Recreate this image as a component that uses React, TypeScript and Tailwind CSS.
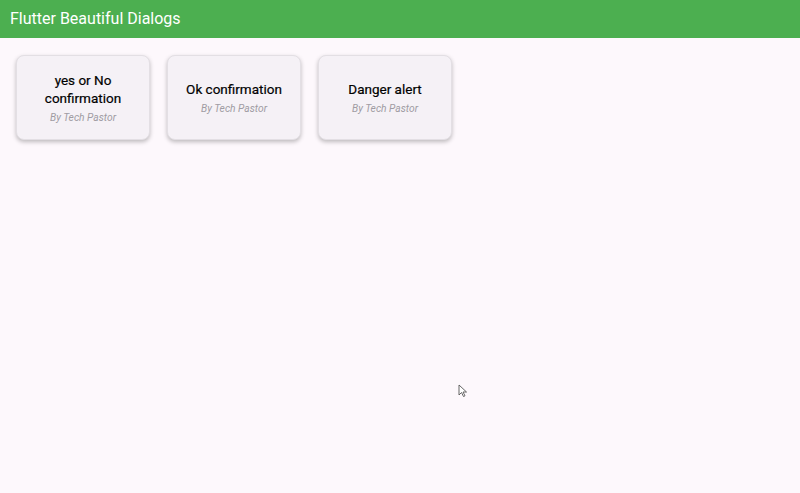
import React from "react"

const cards = ["yes or No confirmation", "Ok confirmation", "Danger alert"]

const Card = ({ title }: { title: string }) => {
    return (
        <div className="w-[134px] h-[85px] rounded-[8px] bg-[#f5f1f6] border border-[#e3dfe4] shadow-[0_2px_4px_rgba(0,0,0,0.25)] flex flex-col items-center justify-center px-3 text-center">
            <p className="text-[13.5px] leading-[18px] font-normal text-black [-webkit-text-stroke:0.2px_black]">{title}</p>
            <p className="text-[10.25px] leading-[15px] italic text-[#a09ca3] mt-[3px]">By Tech Pastor</p>
        </div>
    )
}

export default function App() {
    return (
        <div className="relative w-[800px] h-[493px] bg-[#fdf8fc] overflow-hidden" style={{ fontFamily: "Roboto, 'Liberation Sans', sans-serif" }}>
            {/* app bar */}
            <div className="h-[38px] bg-[#4caf50] flex items-center px-[10px]">
                <p className="text-white text-[16px]">Flutter Beautiful Dialogs</p>
            </div>

            {/* cards */}
            <div className="flex gap-[17px] pl-[16px] pt-[17px]">
                {cards.map((c) => (
                    <Card key={c} title={c} />
                ))}
            </div>

            {/* mouse cursor */}
            <svg className="absolute left-[458px] top-[384px]" width="10" height="14" viewBox="0 0 10 14">
                <path d="M1 1 L1 11 L3.5 8.5 L5.5 12.5 L7 11.8 L5 8 L8.5 8 Z" fill="#fff" stroke="#555" strokeWidth="0.9" strokeLinejoin="round" />
            </svg>
        </div>
    )
}
